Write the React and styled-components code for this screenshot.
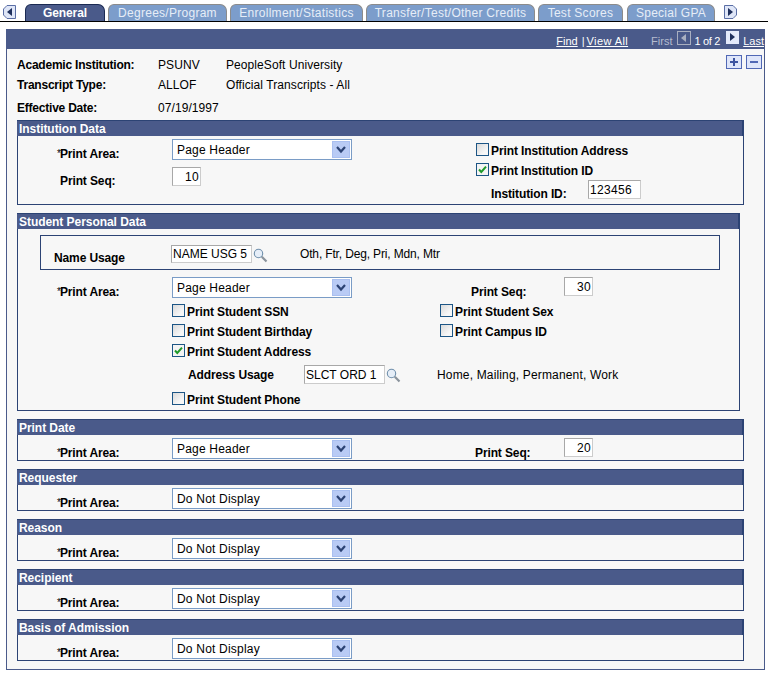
import React from "react";
import styled, { createGlobalStyle } from "styled-components";

const Global = createGlobalStyle`
  html, body { margin: 0; padding: 0; background: #fff; }
  body { font-family: "Liberation Sans", Arial, sans-serif; font-size: 12px; color: #000; }
  * { box-sizing: border-box; }
`;

const Page = styled.div`width: 773px; height: 674px; overflow: hidden; background: #fff;`;

const TabBar = styled.div`
  display: flex; align-items: flex-end; height: 22px; width: 768px;
  padding: 4px 0 0 3px; border-bottom: 1px solid #000;
`;
const ScrollBtn = styled.svg`
  width: 13px; height: 14px; align-self: flex-start; flex: none;
  margin: 1px ${p => p.$mr || 0}px 0 0;
`;
const Tab = styled.div`
  height: 17px; width: ${p => p.$w}px; margin-right: ${p => p.$gap ?? 3}px; flex: none;
  display: flex; align-items: center; justify-content: center;
  border-radius: 6px 7px 0 0;
  letter-spacing: ${p => p.$active ? "-.1px" : ".27px"}; white-space: nowrap;
  background: ${p => p.$active ? "#4a5a8a" : "#7c9dcb"};
  color: ${p => p.$active ? "#fff" : "#e6edf7"};
  font-weight: ${p => p.$active ? 700 : 400};
  border-top: 1px solid ${p => p.$active ? "#1b2a52" : "#8b8b8b"};
  border-left: 1px solid ${p => p.$active ? "#1b2a52" : "#8b8b8b"};
  border-right: 1px solid ${p => p.$active ? "#1b2a52" : "#8b8b8b"};
`;

const Panel = styled.div`
  width: 759px; height: 641px; margin: 7px 0 0 6px;
  border: 1px solid #4a5a8a; border-top: 0; background: #f7f7f7;
  display: flex; flex-direction: column;
`;
const PanelHeader = styled.div`
  height: 20px; flex: none; background: #4a5a8a; color: #fff;
  display: flex; align-items: center; justify-content: flex-end;
  font-size: 11px; padding: 4px 0 0 0; white-space: nowrap;
`;
const NavLink = styled.span`
  text-decoration: underline; margin-left: ${p => p.$ml || 0}px; letter-spacing: ${p => p.$ls || 0}px;
`;
const NavText = styled.span`
  margin-left: ${p => p.$ml || 0}px; letter-spacing: ${p => p.$ls || 0}px;
  color: ${p => p.$dim ? "#b5bccf" : "#fff"};
`;
const NavIcon = styled.svg`width: ${p => p.$w || 14}px; height: 14px; flex: none; margin: -6px 0 0 ${p => p.$ml || 0}px;`;

const Info = styled.div`
  height: 71px; flex: none; display: flex; justify-content: space-between;
  padding: 6px 2px 0 10px;
`;
const InfoRows = styled.div`display: flex; flex-direction: column;`;
const InfoRow = styled.div`
  display: grid; grid-template-columns: 141px 68px auto; height: ${p => p.$h || 20}px; align-items: center;
  margin-top: ${p => p.$mt || 0}px; letter-spacing: .08px;
`;
const Strong = styled.span`font-weight: 700; letter-spacing: -.22px;`;
const PlusMinus = styled.div`display: flex; gap: 4px; align-items: flex-start;`;
const PmIcon = styled.svg`width: 16px; height: 14px; display: block;`;

const Section = styled.section`
  width: ${p => p.$w || 727}px; height: ${p => p.$h}px; flex: none; margin: 0 0 8px 10px;
  border: 1px solid #2c4374; border-top: 0;
`;
const SectionTitle = styled.div`
  height: 16px; margin: 0 -1px; background: #4a5a8a; color: #fff; font-weight: 700;
  padding: 0 0 0 2px; line-height: 16px; border-top: 1px solid #2c4374;
  border-right: 2px solid #2c4374; letter-spacing: -.05px;
`;
const Columns = styled.div`display: flex;`;
const Column = styled.div`
  width: ${p => p.$w ? p.$w + "px" : "auto"}; display: flex; flex-direction: column;
  padding-top: ${p => p.$pt || 0}px; margin-left: ${p => p.$ml || 0}px;
`;
const FieldRow = styled.div`
  display: flex; align-items: flex-start; height: ${p => p.$h || 20}px;
  margin-top: ${p => p.$mt || 0}px; flex: none;
`;
const Label = styled.label`
  flex: none; font-weight: 700; letter-spacing: -.12px; white-space: nowrap;
  margin-left: ${p => p.$ml || 0}px; width: ${p => p.$w}px; padding-top: ${p => p.$pt ?? 8}px; line-height: 14px;
`;
const Star = styled.span`font-weight: 400; font-size: 10px; letter-spacing: -1px; vertical-align: 1px;`;

const SelectBox = styled.div`
  width: 180px; height: 21px; flex: none; background: #fff; border: 1px solid #7a9cc6;
  display: flex; align-items: center; justify-content: space-between;
  padding: 0 1px 0 4px; letter-spacing: .2px; line-height: 14px; font-size: 12px;
`;
const SelectArrow = styled.svg`width: 18px; height: 17px; flex: none; display: block;`;
const TextInput = styled.input`
  width: ${p => p.$w}px; height: ${p => p.$h || 19}px; flex: none; margin: 0;
  border: 1px solid #a8a8a8; border-right-color: #ccc; border-bottom-color: #ccc;
  background: #fff; color: #000; outline: none; border-radius: 0;
  font: 12px "Liberation Sans", Arial, sans-serif; letter-spacing: ${p => p.$ls || 0}px;
  padding: 0 1px; text-align: ${p => p.$right ? "right" : "left"};
`;
const Lookup = styled.svg`width: 15px; height: 15px; flex: none; margin: 3px 0 0 1px;`;
const Desc = styled.span`
  flex: none; margin-left: ${p => p.$ml}px; padding-top: ${p => p.$pt || 0}px; line-height: 14px;
  letter-spacing: ${p => p.$ls ?? .16}px;
`;
const CheckRow = styled.div`
  display: flex; align-items: flex-start; height: 13px; line-height: 16px; margin-top: ${p => p.$mt || 0}px; flex: none;
  font-weight: 700; letter-spacing: -.1px; white-space: nowrap;
`;
const CheckBox = styled.svg`width: 13px; height: 13px; flex: none; margin-right: 2px; display: block;`;
const NameBox = styled.div`
  height: 35px; width: 680px; margin: 6px 0 7px 22px; border: 1px solid #2c4374;
  display: flex; align-items: flex-start; padding-top: 9px;
`;

const Check = ({ on }) => (
  <CheckBox viewBox="0 0 13 13">
    <defs>
      <linearGradient id="cbg" x1="0" y1="0" x2="1" y2="1">
        <stop offset="0" stopColor="#d8d8d8" />
        <stop offset="0.7" stopColor="#f7f7f7" />
      </linearGradient>
    </defs>
    <rect x=".5" y=".5" width="12" height="12" fill={on ? "#f4f4f4" : "url(#cbg)"} stroke="#1c5585" />
    {on && <path d="M3 6.5 5.3 9 10 3.6" fill="none" stroke="#1f9a2a" strokeWidth="2" />}
  </CheckBox>
);

const Arrow = () => (
  <SelectArrow viewBox="0 0 18 17">
    <rect width="18" height="17" fill="#a9bff0" />
    <rect x="1" y="1" width="16" height="15" fill="#b9cbf5" />
    <path d="M5 6 9 10.5 13 6" fill="none" stroke="#2c4374" strokeWidth="2.2" />
  </SelectArrow>
);

const Select = ({ value }) => (
  <SelectBox>
    <span>{value}</span>
    <Arrow />
  </SelectBox>
);

const Glass = () => (
  <Lookup viewBox="0 0 15 15">
    <circle cx="5.5" cy="5.5" r="4.2" fill="#e6eef8" stroke="#6f8fab" strokeWidth="1.1" />
    <path d="M8.8 8.8 13.5 13.5" stroke="#8a939c" strokeWidth="2.2" />
  </Lookup>
);

const PrintArea = ({ value }) => (
  <FieldRow $h={21}>
    <Label $ml={39} $w={115}><Star>*</Star>Print Area:</Label>
    <Select value={value} />
  </FieldRow>
);

const SimpleSection = ({ title, value }) => (
  <Section $h={42}>
    <SectionTitle>{title}</SectionTitle>
    <Columns>
      <Column $pt={3}>
        <PrintArea value={value} />
      </Column>
    </Columns>
  </Section>
);

export default function App() {
  return (
    <Page>
      <Global />
      <TabBar>
        <ScrollBtn $mr={9} viewBox="0 0 13 14">
          <path d="M12.5.5H4L.5 4v6L4 13.5h8.5z" fill="#dfe6f7" stroke="#5a6ea5" />
          <path d="M9 3v8L4 7z" fill="#1e2f5c" />
        </ScrollBtn>
        <Tab $active $w={80}>General</Tab>
        <Tab $w={119}>Degrees/Program</Tab>
        <Tab $w={133}>Enrollment/Statistics</Tab>
        <Tab $w={169}>Transfer/Test/Other Credits</Tab>
        <Tab $w={85} $gap={4}>Test Scores</Tab>
        <Tab $w={88} $gap={9}>Special GPA</Tab>
        <ScrollBtn viewBox="0 0 13 14">
          <path d="M.5.5H9L12.5 4v6L9 13.5H.5z" fill="#dfe6f7" stroke="#5a6ea5" />
          <path d="M4 3v8l5-4z" fill="#1e2f5c" />
        </ScrollBtn>
      </TabBar>
      <Panel>
        <PanelHeader>
          <NavLink>Find</NavLink>
          <NavText $ml={4}>|</NavText>
          <NavLink $ml={2} $ls={.4}>View All</NavLink>
          <NavText $ml={23} $dim>First</NavText>
          <NavIcon $ml={5} viewBox="0 0 14 14">
            <rect x=".5" y=".5" width="13" height="13" fill="#4a5a8a" stroke="#a9afc0" />
            <path d="M9 3v8L4 7z" fill="#a9afc0" />
          </NavIcon>
          <NavText $ml={3} $ls={-.3}>1 of 2</NavText>
          <NavIcon $w={13} $ml={6} viewBox="0 0 13 14">
            <rect width="13" height="13" fill="#e4eafa" />
            <path d="M4 2v8l5-4z" fill="#1e2f5c" />
          </NavIcon>
          <NavLink $ml={4}>Last</NavLink>
        </PanelHeader>
        <Info>
          <InfoRows>
            <InfoRow><Strong>Academic Institution:</Strong><span>PSUNV</span><span>PeopleSoft University</span></InfoRow>
            <InfoRow><Strong>Transcript Type:</Strong><span>ALLOF</span><span>Official Transcripts - All</span></InfoRow>
            <InfoRow $mt={3}><Strong>Effective Date:</Strong><span>07/19/1997</span></InfoRow>
          </InfoRows>
          <PlusMinus>
            <PmIcon viewBox="0 0 16 14">
              <rect x=".5" y=".5" width="15" height="13" fill="#dfe6fa" stroke="#5168b5" />
              <path d="M4 7h8M8 3v8" stroke="#3d54a0" strokeWidth="2" />
            </PmIcon>
            <PmIcon viewBox="0 0 16 14">
              <rect x=".5" y=".5" width="15" height="13" fill="#dfe6fa" stroke="#5168b5" />
              <path d="M4 7h8" stroke="#5168b5" strokeWidth="2" />
            </PmIcon>
          </PlusMinus>
        </Info>

        <Section $h={85}>
          <SectionTitle>Institution Data</SectionTitle>
          <Columns>
            <Column $w={458} $pt={3}>
              <PrintArea value="Page Header" />
              <FieldRow $mt={7}>
                <Label $ml={42} $w={112} $pt={7}>Print Seq:</Label>
                <TextInput $w={29} $right $ls={.3} readOnly value="10" />
              </FieldRow>
            </Column>
            <Column $pt={7}>
              <CheckRow><Check />Print Institution Address</CheckRow>
              <CheckRow $mt={7}><Check on />Print Institution ID</CheckRow>
              <FieldRow $mt={4}>
                <Label $ml={15} $w={97} $pt={7}>Institution ID:</Label>
                <TextInput $w={53} $h={19} $ls={.35} readOnly value="123456" />
              </FieldRow>
            </Column>
          </Columns>
        </Section>

        <Section $w={723} $h={198}>
          <SectionTitle>Student Personal Data</SectionTitle>
          <NameBox>
            <Label $ml={13} $w={117} $pt={6}>Name Usage</Label>
            <TextInput $w={81} $h={18} readOnly value="NAME USG 5" />
            <Glass />
            <Desc $ml={32} $pt={2} $ls={-.15}>Oth, Ftr, Deg, Pri, Mdn, Mtr</Desc>
          </NameBox>
          <FieldRow $h={21}>
            <Label $ml={39} $w={115}><Star>*</Star>Print Area:</Label>
            <Select value="Page Header" />
            <Label $ml={119} $w={93}>Print Seq:</Label>
            <TextInput $w={29} $right $ls={.3} readOnly value="30" />
          </FieldRow>
          <Columns>
            <Column $w={422} $pt={6}>
              <Column $ml={154}>
                <CheckRow><Check />Print Student SSN</CheckRow>
                <CheckRow $mt={7}><Check />Print Student Birthday</CheckRow>
              </Column>
            </Column>
            <Column $pt={6}>
              <CheckRow><Check />Print Student Sex</CheckRow>
              <CheckRow $mt={7}><Check />Print Campus ID</CheckRow>
            </Column>
          </Columns>
          <Column $ml={154}>
            <CheckRow $mt={7}><Check on />Print Student Address</CheckRow>
            <FieldRow $mt={8}>
              <Label $ml={16} $w={116} $pt={3}>Address Usage</Label>
              <TextInput $w={81} $h={19} readOnly value="SLCT ORD 1" />
              <Glass />
              <Desc $ml={36} $pt={3}>Home, Mailing, Permanent, Work</Desc>
            </FieldRow>
            <CheckRow $mt={7}><Check />Print Student Phone</CheckRow>
          </Column>
        </Section>

        <Section $h={42}>
          <SectionTitle>Print Date</SectionTitle>
          <Columns>
            <Column $pt={3}>
              <FieldRow $h={21}>
                <Label $ml={39} $w={115}><Star>*</Star>Print Area:</Label>
                <Select value="Page Header" />
                <Label $ml={123} $w={89}>Print Seq:</Label>
                <TextInput $w={29} $right $ls={.3} readOnly value="20" />
              </FieldRow>
            </Column>
          </Columns>
        </Section>

        <SimpleSection title="Requester" value="Do Not Display" />
        <SimpleSection title="Reason" value="Do Not Display" />
        <SimpleSection title="Recipient" value="Do Not Display" />
        <SimpleSection title="Basis of Admission" value="Do Not Display" />
      </Panel>
    </Page>
  );
}
